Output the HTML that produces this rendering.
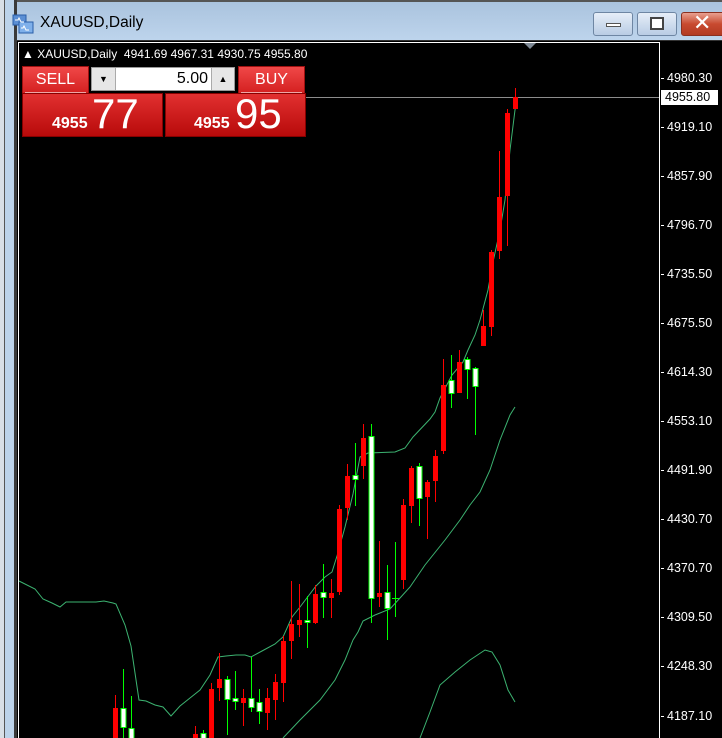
<!DOCTYPE html>
<html><head><meta charset="utf-8"><style>
*{margin:0;padding:0;box-sizing:border-box}
body{width:722px;height:738px;overflow:hidden;background:#bcd3ea;font-family:"Liberation Sans","DejaVu Sans",sans-serif;position:relative}
.abs{position:absolute}
#title{left:0;top:0;width:722px;height:40px;background:linear-gradient(#aac3de,#bdd4ec);border-top:2px solid #555}
#lstrip{left:0;top:0;width:17px;height:738px;background:linear-gradient(90deg,#d8dfe6 0,#d8dfe6 4px,#555 4px,#555 5px,#bcd3ea 5px,#bcd3ea 14px,#3a3a3a 14px)}
.btn{top:12px;height:24px;border:1px solid #6e86a3;border-radius:3px;background:linear-gradient(#e6eef8,#b9cce4)}
#chart{left:17px;top:40px;width:705px;height:698px;background:#000;border-top:1px solid #333}
</style></head><body>
<div id="title" class="abs"></div>
<div id="lstrip" class="abs"></div>
<svg class="abs" style="left:12px;top:14px" width="24" height="22" viewBox="0 0 24 22">
<rect x="1" y="1" width="13" height="10" fill="#5b8fd4" stroke="#2a5ea8"/><rect x="7" y="8" width="14" height="11" fill="#7fb0ea" stroke="#2a5ea8"/>
<path d="M3 6h3l1-2 2 4h3M9 14h2l1-2 2 4h3" stroke="#fff" fill="none"/></svg>
<div class="abs" style="left:40px;top:14px;font-size:15.5px;color:#000">XAUUSD,Daily</div>
<div class="abs btn" style="left:593px;width:40px"><div class="abs" style="left:12px;top:10px;width:15px;height:4px;background:#fff;border:1px solid #555"></div></div>
<div class="abs btn" style="left:637px;width:40px"><div class="abs" style="left:12px;top:4px;width:14px;height:13px;border:2px solid #444;background:#fff;box-shadow:inset 0 0 0 2px #fff"></div></div>
<div class="abs btn" style="left:681px;width:45px;background:linear-gradient(#e8a090,#c84a30 50%,#b23a22);border-color:#8a3020"><div class="abs" style="left:11px;top:-3px;color:#fff;font-size:22px;font-weight:bold">✕</div></div>
<div id="chart" class="abs"></div>
<svg class="abs" style="left:0;top:0" width="722" height="738">
<line x1="18.5" y1="42.5" x2="659.5" y2="42.5" stroke="#fff"/>
<line x1="18.5" y1="42" x2="18.5" y2="738" stroke="#fff"/>
<line x1="659.5" y1="42" x2="659.5" y2="738" stroke="#fff"/>
<polygon points="524,43 536,43 530,49" fill="#7f8a96"/>
<line x1="305" y1="97.5" x2="659" y2="97.5" stroke="#8c8c8c"/>
<g fill="none" stroke="#3cb371" stroke-width="1">
<polyline points="19,581 35,589 43,599 52,603 60,607 66,602 96,602 104,601 113,603 116,604 125,625 131,646 139,700 146,701 155,705 163,707 171,716 180,706 190,698 200,690 210,675 218,657 226,656 236,655 245,655 251,657 262,651 275,644 283,637 292,617 300,607 316,586 325,577 332,572 337,556 345,527 353,494 360,457 368,453 395,452 405,448 413,437 430,419 435,412 440,398 452,375 463,362 468,350 475,335 480,320 488,290 493,262 500,230 505,200 510,150 515,110 517,97"/>
<polyline points="283,738 300,720 320,700 335,680 345,660 353,640 358,632 363,621 375,615 390,609 400,598 410,587 425,565 445,540 460,520 470,505 480,492 490,470 500,440 510,415 515,407"/>
<polyline points="420,738 430,712 440,685 455,672 470,660 485,650 492,652 500,665 508,690 515,702"/>
</g>
<g id="c"></g>
</svg>
<script>
var R=[[115,708,738,695,738],[195,734,738,726,738],[211,689,738,683,738],[219,679,688,653,701],[243,698,703,689,726],[267,698,713,688,730],[275,682,700,674,720],[283,641,683,636,702],[291,624,641,581,659],[299,620,625,584,637],[315,594,623,585,624],[331,593,598,579,618],[339,509,592,505,595],[347,476,508,464,520],[363,438,466,424,479],[379,593,597,541,607],[403,505,580,499,589],[411,468,506,466,523],[427,482,497,480,539],[435,456,481,450,502],[443,385,451,359,454],[459,362,393,350,393],[483,326,346,310,346],[491,252,327,250,336],[499,197,251,151,259],[507,113,196,109,246],[515,97,109,88,109]];
var W=[[123,708,728,669,738],[131,728,740,696,740],[203,733,740,730,740],[227,679,700,676,735],[235,698,702,671,710],[251,698,708,657,712],[259,702,712,689,724],[307,620,623,596,648],[323,592,598,564,618],[355,475,480,443,506],[371,436,599,424,623],[387,592,609,565,640],[419,466,499,463,526],[451,380,394,355,408],[467,359,370,357,399],[475,368,387,367,435]];
var s='';
R.forEach(function(c){s+='<line x1="'+(c[0]+.5)+'" y1="'+c[3]+'" x2="'+(c[0]+.5)+'" y2="'+c[4]+'" stroke="#f00"/><rect x="'+(c[0]-2)+'" y="'+c[1]+'" width="5" height="'+(c[2]-c[1])+'" fill="#f00"/>';});
W.forEach(function(c){s+='<line x1="'+(c[0]+.5)+'" y1="'+c[3]+'" x2="'+(c[0]+.5)+'" y2="'+c[4]+'" stroke="#0f0"/><rect x="'+(c[0]-2)+'" y="'+(c[1]+.5)+'" width="5" height="'+(c[2]-c[1]-1)+'" fill="#fff" stroke="#0f0"/>';});
s+='<line x1="395.5" y1="542" x2="395.5" y2="617" stroke="#0f0"/><line x1="392" y1="598.5" x2="399" y2="598.5" stroke="#0f0"/>';
document.getElementById('c').innerHTML=s;
</script>
<div class="abs" style="left:22px;top:47px;color:#fff;font-size:12px;white-space:pre">▲ XAUUSD,Daily  4941.69 4967.31 4930.75 4955.80</div>
<div class="abs" style="left:22px;top:66px;width:67px;height:28px;background:linear-gradient(#f04848,#d42020);border:1px solid #a01010"></div>
<div class="abs" style="left:25px;top:92px;width:61px;height:1px;background:#fff;opacity:.6"></div>
<div class="abs" style="left:22px;top:71px;width:67px;text-align:center;color:#fff;font-size:16px">SELL</div>
<div class="abs" style="left:91px;top:67px;width:144px;height:24px;background:#fff;border:1px solid #999"></div>
<div class="abs" style="left:92px;top:68px;width:24px;height:22px;background:#e6e6e6;border-right:1px solid #aaa;font-size:9px;text-align:center;line-height:22px">▼</div>
<div class="abs" style="left:211px;top:68px;width:23px;height:22px;background:#e6e6e6;border-left:1px solid #aaa;font-size:9px;text-align:center;line-height:22px">▲</div>
<div class="abs" style="left:118px;top:70px;width:90px;text-align:right;font-size:16px;color:#000">5.00</div>
<div class="abs" style="left:238px;top:66px;width:67px;height:28px;background:linear-gradient(#f04848,#d42020);border:1px solid #a01010"></div>
<div class="abs" style="left:241px;top:92px;width:61px;height:1px;background:#fff;opacity:.6"></div>
<div class="abs" style="left:238px;top:71px;width:67px;text-align:center;color:#fff;font-size:16px">BUY</div>
<div class="abs" style="left:22px;top:93px;width:141px;height:44px;background:linear-gradient(#e23030,#b80a0a);border:1px solid #800"></div>
<div class="abs" style="left:165px;top:93px;width:141px;height:44px;background:linear-gradient(#e23030,#b80a0a);border:1px solid #800"></div>
<div class="abs" style="left:52px;top:115px;color:#fff;font-size:16px;font-weight:bold">4955</div>
<div class="abs" style="left:92px;top:90px;color:#fff;font-size:42px">77</div>
<div class="abs" style="left:194px;top:115px;color:#fff;font-size:16px;font-weight:bold">4955</div>
<div class="abs" style="left:235px;top:90px;color:#fff;font-size:42px">95</div>
<div class="abs" style="left:660px;top:0;font-size:12.5px;color:#fff;line-height:14px">
<div class="abs" style="top:71px;left:7px">4980.30</div>
<div class="abs" style="top:90px;left:1px;width:57px;height:15px;background:#fff;color:#000;padding-left:4px">4955.80</div>
<div class="abs" style="top:120px;left:7px">4919.10</div>
<div class="abs" style="top:169px;left:7px">4857.90</div>
<div class="abs" style="top:218px;left:7px">4796.70</div>
<div class="abs" style="top:267px;left:7px">4735.50</div>
<div class="abs" style="top:316px;left:7px">4675.50</div>
<div class="abs" style="top:365px;left:7px">4614.30</div>
<div class="abs" style="top:414px;left:7px">4553.10</div>
<div class="abs" style="top:463px;left:7px">4491.90</div>
<div class="abs" style="top:512px;left:7px">4430.70</div>
<div class="abs" style="top:561px;left:7px">4370.70</div>
<div class="abs" style="top:610px;left:7px">4309.50</div>
<div class="abs" style="top:659px;left:7px">4248.30</div>
<div class="abs" style="top:709px;left:7px">4187.10</div>
</div>
<svg class="abs" style="left:660px;top:0" width="6" height="738"><g stroke="#fff">
<line x1="1" y1="78.5" x2="4" y2="78.5"/><line x1="1" y1="127.5" x2="4" y2="127.5"/><line x1="1" y1="176.5" x2="4" y2="176.5"/><line x1="1" y1="225.5" x2="4" y2="225.5"/><line x1="1" y1="274.5" x2="4" y2="274.5"/><line x1="1" y1="323.5" x2="4" y2="323.5"/><line x1="1" y1="372.5" x2="4" y2="372.5"/><line x1="1" y1="421.5" x2="4" y2="421.5"/><line x1="1" y1="470.5" x2="4" y2="470.5"/><line x1="1" y1="519.5" x2="4" y2="519.5"/><line x1="1" y1="568.5" x2="4" y2="568.5"/><line x1="1" y1="617.5" x2="4" y2="617.5"/><line x1="1" y1="666.5" x2="4" y2="666.5"/><line x1="1" y1="716.5" x2="4" y2="716.5"/></g></svg>
</body></html>
